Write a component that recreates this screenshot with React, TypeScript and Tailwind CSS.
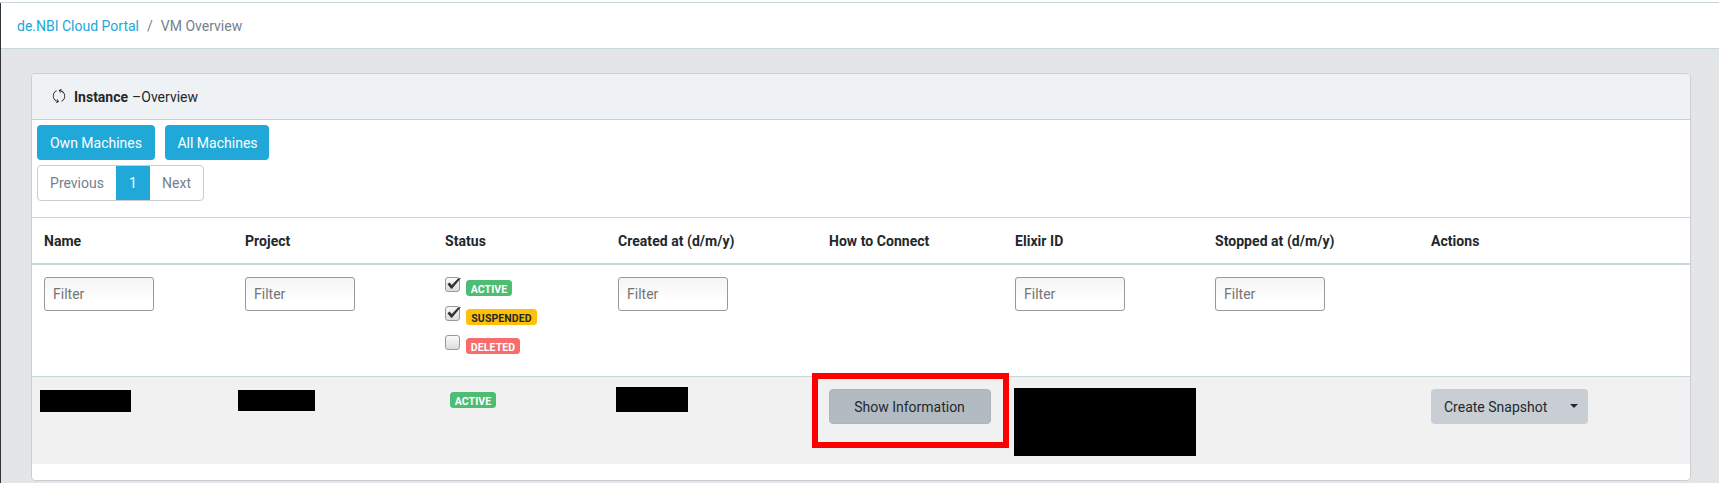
import { SlRefresh } from "react-icons/sl";

const columns = [
  { title: "Name", filter: true },
  { title: "Project", filter: true },
  { title: "Status", filter: false },
  { title: "Created at (d/m/y)", filter: true },
  { title: "How to Connect", filter: false },
  { title: "Elixir ID", filter: true },
  { title: "Stopped at (d/m/y)", filter: true },
  { title: "Actions", filter: false },
];

const grid = "grid grid-cols-[201px_200px_173px_211px_186px_200px_216px_1fr]";

const statuses = [
  { label: "ACTIVE", checked: true, tone: "w-[46px] bg-[#4dbd74] text-white" },
  { label: "SUSPENDED", checked: true, tone: "w-[71px] bg-[#ffc107] text-[#23282c]" },
  { label: "DELETED", checked: false, tone: "w-[54px] bg-[#f86c6b] text-white" },
];

function Badge({ label, tone }: { label: string; tone: string }) {
  return (
    <span className={`flex h-4 items-start justify-center rounded-[3.5px] pt-[4px] text-[10.5px] leading-[11px] font-bold tracking-[0.1px] whitespace-nowrap ${tone}`}>
      {label}
    </span>
  );
}

function Checkbox({ checked }: { checked: boolean }) {
  return (
    <span className="h-[15px] w-[15px] rounded-[3px] border border-[#999] bg-linear-to-b from-[#fafafa] to-[#dcdcdc]">
      {checked && (
        <svg viewBox="0 0 17 15" className="-mt-px -ml-px h-[15px] w-[17px] overflow-visible">
          <path d="M2.4 7.2 L4.6 5.6 L6.8 8 L13 1.4 L16 1 L7 11.8 L6.2 11.8 Z" fill="#2e3436" />
        </svg>
      )}
    </span>
  );
}

export default function App() {
  return (
    <div className="flex h-[483px] flex-col overflow-hidden bg-[#e4e5e6] font-[Roboto,sans-serif] text-[14px] leading-[21px] text-[#23282c]">
      <div className="h-[3px] shrink-0 border-b border-[#c8d3da] bg-white" />
      <div className="flex min-h-0 flex-1 flex-col border-l border-[#2f353a]">
        <nav className="flex h-[46px] shrink-0 items-center border-b border-[#c8d7dc] bg-white pt-px pl-4">
          <a className="text-[#20a8d8]">de.NBI Cloud Portal</a>
          <span className="px-2 text-[#73818f]">/</span>
          <span className="text-[#73818f]">VM Overview</span>
        </nav>
        <main className="mt-6 ml-[30px] flex h-[408px] w-[1660px] shrink-0 flex-col overflow-hidden rounded-[4px] border border-[#c8ced3] bg-white">
          <header className="flex h-[46px] shrink-0 items-center border-b border-[#c8ced3] bg-[#eff2f5] pt-[2px] pl-5">
            <SlRefresh className="-mt-[3px] mr-2 size-[14px]" />
            <strong className="mr-1 font-bold">Instance</strong>
            <span>–Overview</span>
          </header>
          <div className="flex gap-[10px] pt-[5px] pl-[5px]">
            <button className="h-[35px] w-[118px] rounded-[4px] bg-[#20a8d8] pt-[2px] text-white">Own Machines</button>
            <button className="h-[35px] w-[104px] rounded-[4px] bg-[#20a8d8] pt-[2px] pl-px text-white">All Machines</button>
          </div>
          <div className="mt-[5px] ml-[5px] flex h-9 w-[167px] shrink-0 overflow-hidden rounded-[4px] border border-[#c8ced3] text-[#73818f]">
            <span className="flex w-[78px] items-center justify-center">Previous</span>
            <span className="-my-px flex w-[34px] items-center justify-center bg-[#20a8d8] text-white">1</span>
            <span className="flex flex-1 items-center justify-center">Next</span>
          </div>
          <div className={`${grid} mt-4 h-[48px] shrink-0 border-t border-b-2 border-[#c8d7da] pt-[13px]`}>
            {columns.map((c) => (
              <div key={c.title} className="pl-3 font-bold tracking-[0.04px]">{c.title}</div>
            ))}
          </div>
          <div className={`${grid} h-[111px] shrink-0 pt-3`}>
            {columns.map((c) => (
              <div key={c.title} className="pl-3">
                {c.filter && (
                  <input
                    placeholder="Filter"
                    className="block h-[34px] w-[110px] rounded-[3px] border border-[#999] bg-linear-to-b from-[#f4f4f4] to-white to-70% px-2 placeholder:text-[#757575]"
                  />
                )}
                {c.title === "Status" && (
                  <div className="flex flex-col gap-[10px]">
                    {statuses.map((s) => (
                      <div key={s.label} className="flex h-[19px] justify-start gap-[6px]">
                        <Checkbox checked={s.checked} />
                        <div className="pt-[3px]">
                          <Badge label={s.label} tone={s.tone} />
                        </div>
                      </div>
                    ))}
                  </div>
                )}
              </div>
            ))}
          </div>
          <div className={`${grid} h-[88px] shrink-0 border-t border-[#c8d7dc] bg-[#f1f1f1]`}>
            <div className="pt-[13px] pl-2"><div className="h-[22px] w-[91px] bg-black" /></div>
            <div className="pt-[13px] pl-[5px]"><div className="h-[21px] w-[77px] bg-black" /></div>
            <div className="pt-[15px] pl-[17px]"><Badge label="ACTIVE" tone="w-[46px] bg-[#4dbd74] text-white" /></div>
            <div className="pt-[10px] pl-[10px]"><div className="h-[25px] w-[72px] bg-black" /></div>
            <div className="relative pt-3 pl-3">
              <button className="h-[35px] w-[162px] rounded-[4px] border border-[#acb5bc] bg-[#b3bbc2] pt-[2px] pr-px">Show Information</button>
              <div className="absolute -top-1 -left-[5px] h-[75px] w-[197px] border-6 border-[#ff0000]" />
            </div>
            <div className="pt-[11px] pl-[11px]"><div className="h-[68px] w-[182px] bg-black" /></div>
            <div />
            <div className="pt-3 pl-3">
              <button className="flex h-[35px] w-[157px] items-center justify-between rounded-[4px] bg-[#c8ced3] pr-[10px] pl-[13px]">
                <span className="pt-[2px]">Create Snapshot</span>
                <svg viewBox="0 0 8 4" className="mt-[-2px] h-1 w-2"><path d="M0 0H8L4 4Z" fill="#23282c" /></svg>
              </button>
            </div>
          </div>
        </main>
      </div>
    </div>
  );
}
